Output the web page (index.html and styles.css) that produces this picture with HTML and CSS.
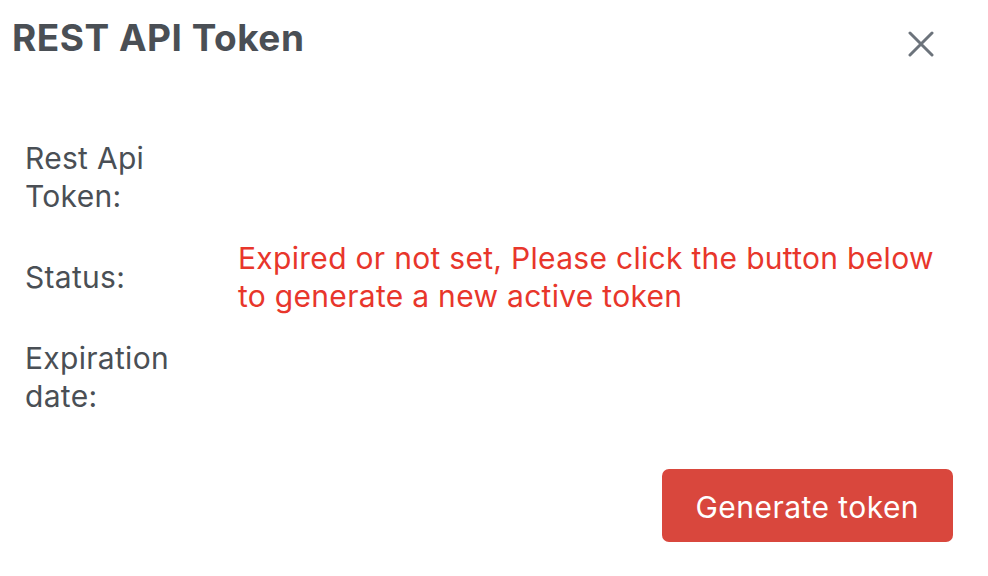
FILE: index.html
```html
<!DOCTYPE html>
<html lang="en">
<head>
    <meta charset="UTF-8">
    <meta name="viewport" content="width=device-width, initial-scale=1.0">
    <title>REST API Token</title>
    <link rel="stylesheet" href="styles.css">
</head>
<body>

    <div class="modal">
        <div class="modal-header">
            <h2 class="modal-title">REST API Token</h2>
            <button class="close-btn" aria-label="Close">
                <svg width="26" height="26" viewBox="0 0 26 26">
                    <path d="M2 2 L24 24 M24 2 L2 24" stroke="#6c737b" stroke-width="3" stroke-linecap="round" fill="none"/>
                </svg>
            </button>
        </div>

        <div class="modal-body">
            <div class="label">Rest Api Token:</div>
            <div class="value"></div>

            <div class="label center">Status:</div>
            <div class="value error">Expired or not set, Please click the button below to generate a new active token</div>

            <div class="label">Expiration date:</div>
            <div class="value"></div>
        </div>

        <div class="modal-footer">
            <button id="generate-btn">Generate token</button>
        </div>
    </div>

</body>
</html>
```

FILE: styles.css
```css
body {
    margin: 0;
    background-color: #ffffff;
    font-family: Inter, "Noto Sans", sans-serif;
    color: #495057;
}

.modal {
    width: 988px;
    height: 576px;
}

.modal-header {
    display: flex;
    justify-content: space-between;
    align-items: flex-start;
    padding: 16px 54px 0 12px;
}

.modal-title {
    margin: 0;
    font-size: 37px;
    font-weight: 700;
    letter-spacing: 0.5px;
    line-height: 44px;
    color: #4a4f55;
}

.close-btn {
    background: none;
    border: none;
    padding: 0;
    margin-top: 15px;
    cursor: pointer;
}

.modal-body {
    display: grid;
    grid-template-columns: 180px 1fr;
    column-gap: 33px;
    row-gap: 24px;
    padding: 79px 35px 0 25px;
    font-size: 30px;
    letter-spacing: 0.3px;
    line-height: 38px;
}

.label {
    color: #4a4f55;
}

.center {
    align-self: center;
}

.error {
    color: #e8362b;
}

.modal-footer {
    display: flex;
    justify-content: flex-end;
    padding: 54px 35px 0 0;
}

#generate-btn {
    background-color: #d9473d;
    color: #ffffff;
    border: none;
    border-radius: 7px;
    padding: 19px 34px 16px;
    font-family: Inter, "Noto Sans", sans-serif;
    font-size: 30px;
    letter-spacing: 0.45px;
    line-height: 38px;
    cursor: pointer;
}
```
